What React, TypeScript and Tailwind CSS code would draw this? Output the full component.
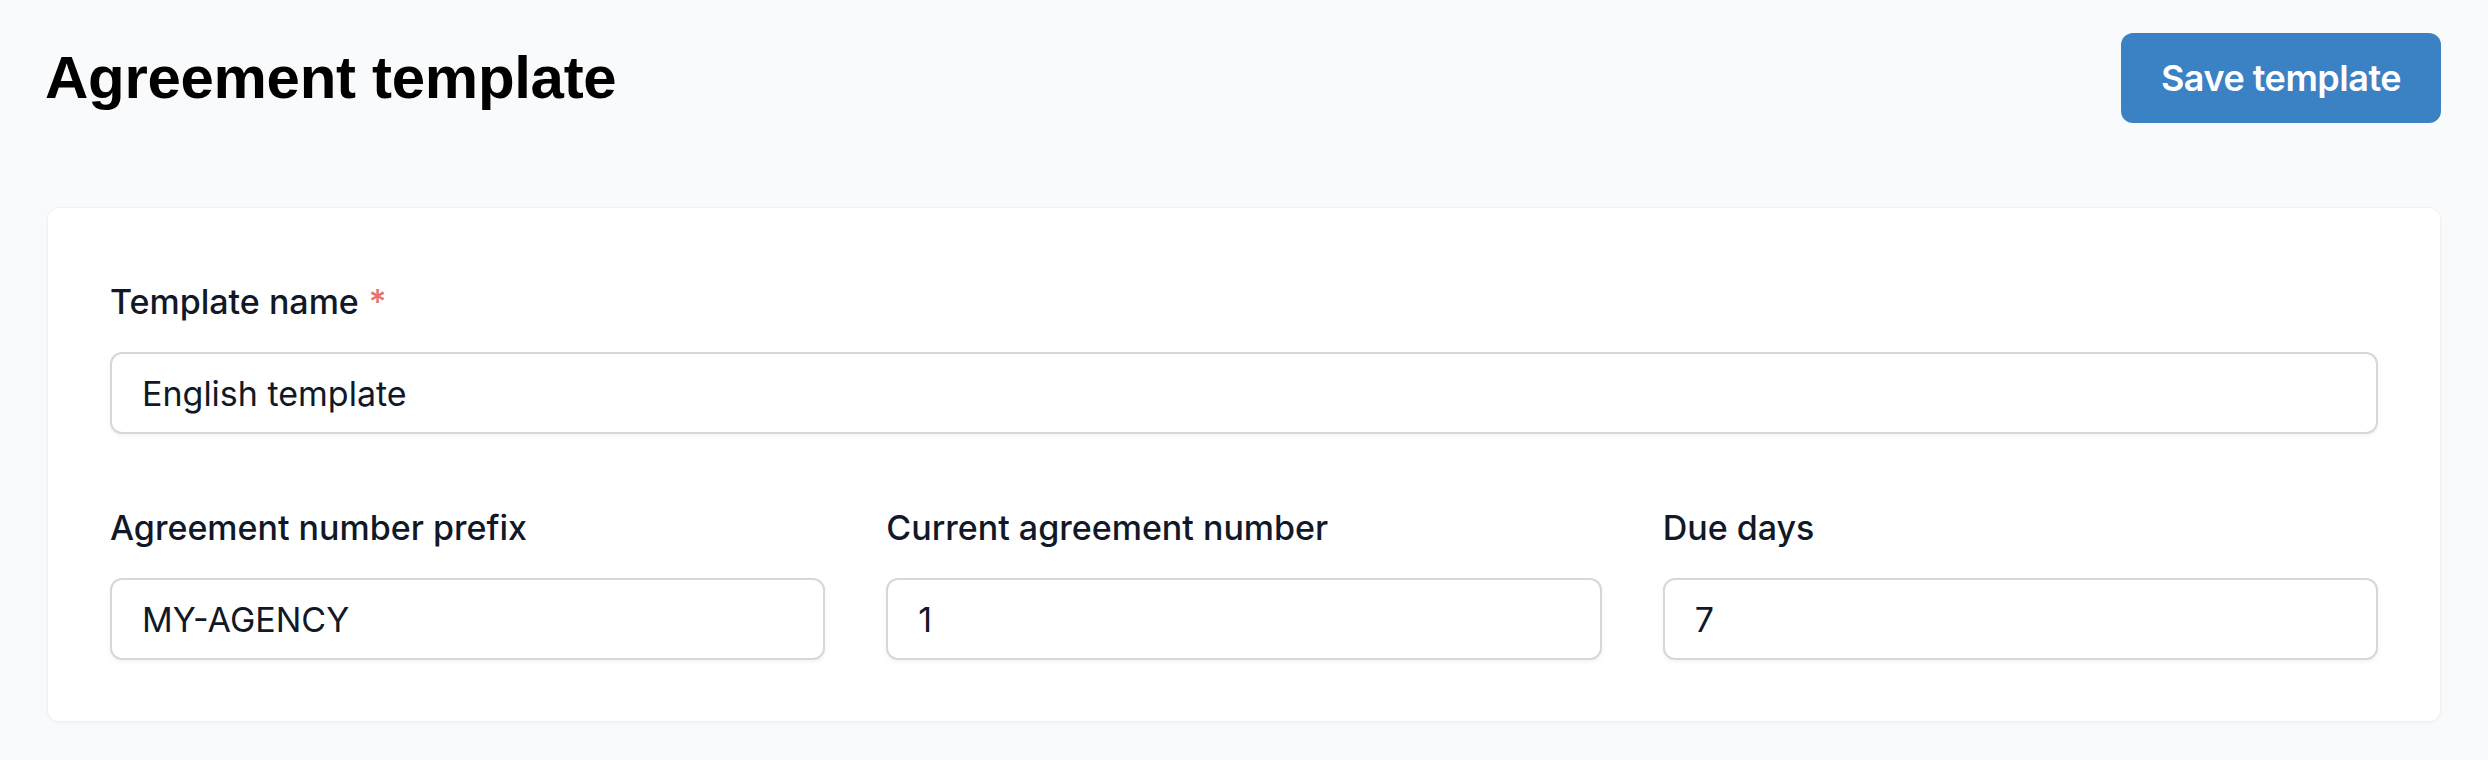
import React from 'react';

const fieldLabel = "block text-[34px] leading-[51px] font-medium text-[#111827] mb-[25px]";
const fieldBox =
  "flex items-center h-[82px] w-full rounded-[12px] border-2 border-[#d6d7da] bg-white pl-[30px] text-[34px] text-[#111827] shadow-[0_2px_4px_rgba(0,0,0,0.05)]";

const Field: React.FC<{ label: string; value: string; required?: boolean }> = ({ label, value, required }) => (
  <div>
    <label className={fieldLabel}>
      {label}
      {required && <span className="ml-[10px] text-[#e5706c]">*</span>}
    </label>
    <div className={fieldBox}>{value}</div>
  </div>
);

const App: React.FC = () => {
  const row = [
    { label: 'Agreement number prefix', value: 'MY-AGENCY' },
    { label: 'Current agreement number', value: '1' },
    { label: 'Due days', value: '7' },
  ];

  return (
    <div className="min-h-[760px] bg-[#f9fafb] px-[47px] pt-[33px] font-['Inter',sans-serif]">
      <div className="flex items-center justify-between mb-[84px]">
        <h1 className="font-['Liberation_Sans',Arial,sans-serif] text-[60px] leading-[60px] font-bold text-black tracking-[-0.3px] -ml-[2px]">
          Agreement template
        </h1>
        <button className="w-[320px] h-[90px] rounded-[12px] bg-[#3b82c4] text-white text-[36px] font-semibold tracking-[-0.5px]">
          Save template
        </button>
      </div>

      <div className="rounded-[12px] bg-white border border-[#f0f1f3] shadow-[0_1px_3px_rgba(0,0,0,0.04)] px-[62px] pt-[68px] pb-[61px]">
        <Field label="Template name" value="English template" required />

        <div className="grid grid-cols-3 gap-x-[61px] mt-[68px]">
          {row.map(f => (
            <Field key={f.label} label={f.label} value={f.value} />
          ))}
        </div>
      </div>
    </div>
  );
};

export default App;
